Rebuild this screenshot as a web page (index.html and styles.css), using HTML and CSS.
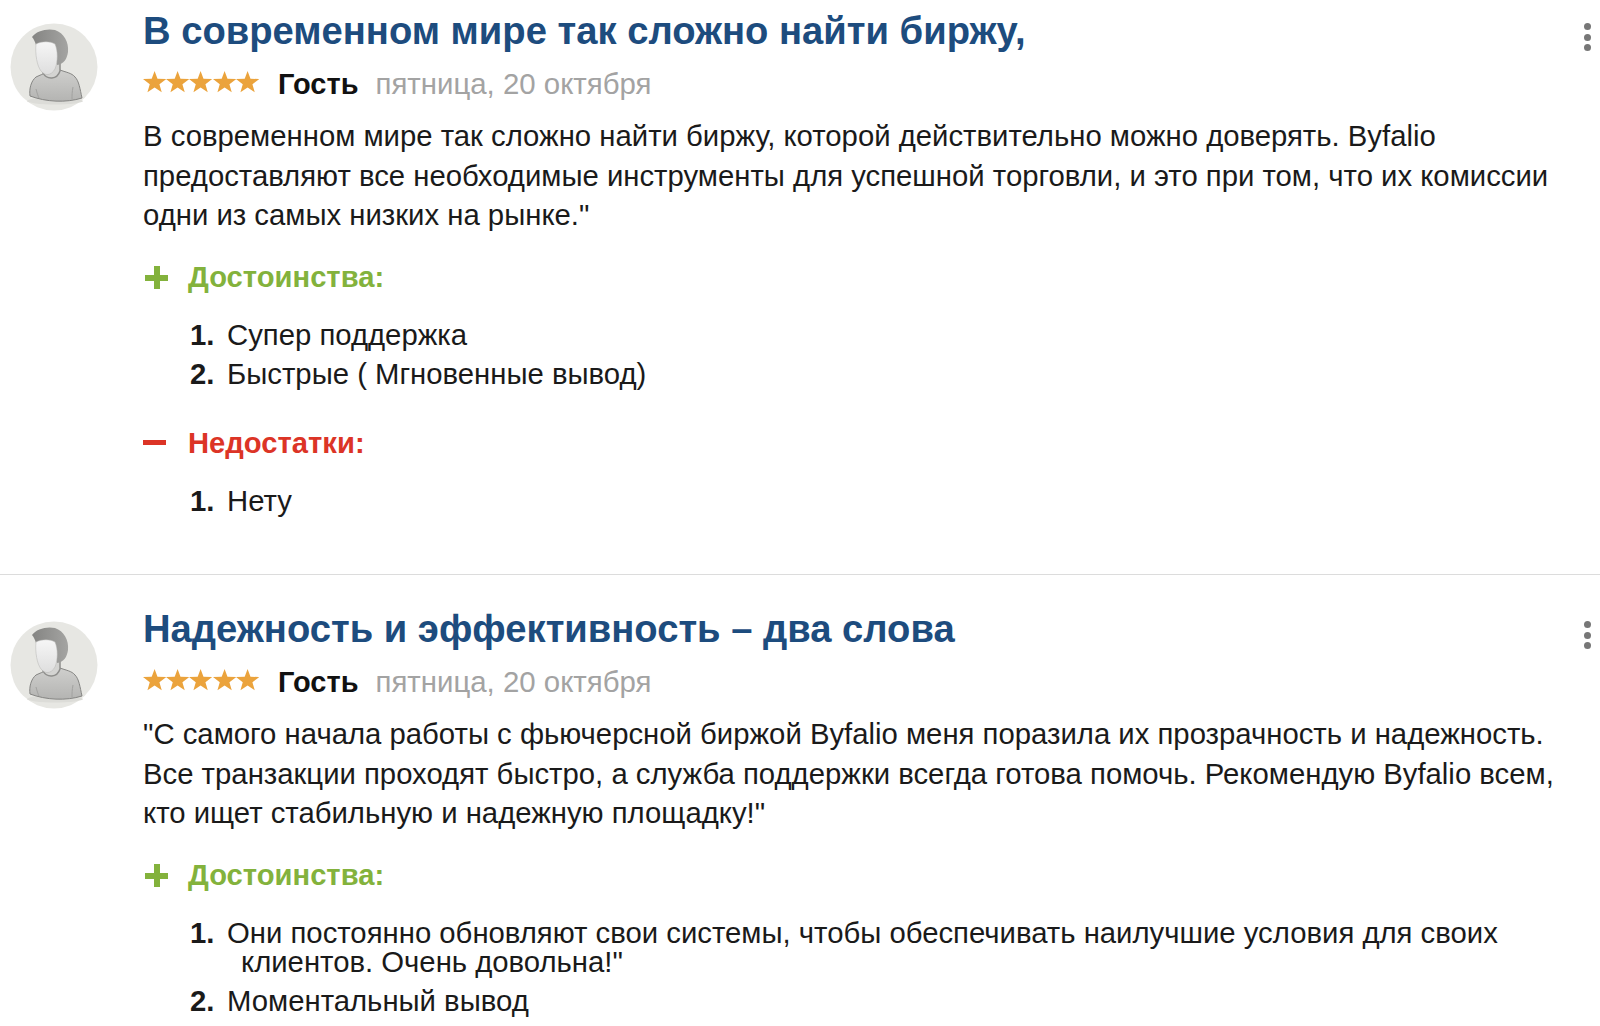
FILE: index.html
```html
<!DOCTYPE html>
<html lang="ru">
<head>
    <meta charset="UTF-8" />
    <meta name="viewport" content="width=device-width, initial-scale=1" />
    <title>Отзывы</title>
    <link rel="stylesheet" href="styles.css">
</head>
<body>
    <svg class="defs" width="0" height="0">
        <defs>
            <linearGradient id="shirt" x1="0" y1="0" x2="0" y2="1">
                <stop offset="0" stop-color="#cfcfcd" />
                <stop offset="1" stop-color="#b4b4b2" />
            </linearGradient>
            <linearGradient id="face" x1="0" y1="0" x2="0" y2="1">
                <stop offset="0" stop-color="#f6f6f6" />
                <stop offset="1" stop-color="#dedede" />
            </linearGradient>
            <linearGradient id="hair" x1="0" y1="0" x2="1" y2="0">
                <stop offset="0" stop-color="#848482" />
                <stop offset="1" stop-color="#a4a4a2" />
            </linearGradient>
            <symbol id="avatar" viewBox="0 0 88 88">
                <circle cx="44" cy="44" r="43.5" fill="#e7e7e3" />
                <ellipse cx="45" cy="78" rx="28" ry="3.500" fill="#dcdcd8" />
                <path d="M20 73 C19 66 21 58 26 54 C30 52 34 51 36 49 C40 55 48 55 50 47 C55 49 62 50 65 54 C69 58 70 66 72 75 C56 80 36 79 20 73 Z" fill="url(#shirt)" stroke="#858583" stroke-width="1" />
                <path d="M26 66 C27 70 28 73 29 75 M63 64 C62 69 62 72 62 76" fill="none" stroke="#a2a2a0" stroke-width="1" />
                <path d="M33 40 L33 50 C37 57 47 57 50 48 L50 36 Z" fill="#d4d4d2" stroke="#8e8e8c" stroke-width="1.500" />
                <path d="M22 14 C26 8 37 5 45 7 C54 10 59 19 58 29 C57 36 54 41 47 42 L44 22 C38 19 31 19 26 22 C25 19 24 16 22 14 Z" fill="url(#hair)" />
                <path d="M26 21 C32 18 40 18 45 21 C48 28 48 38 45 46 C41 53 35 53 31 48 C27 43 25 31 26 21 Z" fill="url(#face)" stroke="#b5b5b3" stroke-width="0.5" />
            </symbol>
            <symbol id="star" viewBox="0 0 24 24">
                <path d="M12 1 L15 9 L24 9.300 L17 14.700 L19.400 23 L12 18.200 L4.600 23 L7 14.700 L0 9.300 L9 9 Z" fill="#eba33c" />
            </symbol>
        </defs>
    </svg>

    <article class="review">
        <svg class="avatar"><use href="#avatar" /></svg>
        <div class="review-body">
            <h2 class="review-title">В современном мире так сложно найти биржу,</h2>
            <div class="meta">
                <span class="stars">
                    <svg class="star"><use href="#star" /></svg>
                    <svg class="star"><use href="#star" /></svg>
                    <svg class="star"><use href="#star" /></svg>
                    <svg class="star"><use href="#star" /></svg>
                    <svg class="star"><use href="#star" /></svg>
                </span>
                <span class="author">Гость</span>
                <span class="date">пятница, 20 октября</span>
            </div>
            <p class="text">В современном мире так сложно найти биржу, которой действительно можно доверять. Byfalio предоставляют все необходимые инструменты для успешной торговли, и это при том, что их комиссии одни из самых низких на рынке."</p>
            <h3 class="pros"><span class="sign plus"></span>Достоинства:</h3>
            <ol class="points">
                <li>Супер поддержка</li>
                <li>Быстрые ( Мгновенные вывод)</li>
            </ol>
            <h3 class="cons"><span class="sign minus"></span>Недостатки:</h3>
            <ol class="points">
                <li>Нету</li>
            </ol>
        </div>
        <div class="more"><i></i><i></i><i></i></div>
    </article>

    <article class="review">
        <svg class="avatar"><use href="#avatar" /></svg>
        <div class="review-body">
            <h2 class="review-title">Надежность и эффективность – два слова</h2>
            <div class="meta">
                <span class="stars">
                    <svg class="star"><use href="#star" /></svg>
                    <svg class="star"><use href="#star" /></svg>
                    <svg class="star"><use href="#star" /></svg>
                    <svg class="star"><use href="#star" /></svg>
                    <svg class="star"><use href="#star" /></svg>
                </span>
                <span class="author">Гость</span>
                <span class="date">пятница, 20 октября</span>
            </div>
            <p class="text">"С самого начала работы с фьючерсной биржой Byfalio меня поразила их прозрачность и надежность. Все транзакции проходят быстро, а служба поддержки всегда готова помочь. Рекомендую Byfalio всем, кто ищет стабильную и надежную площадку!"</p>
            <h3 class="pros"><span class="sign plus"></span>Достоинства:</h3>
            <ol class="points">
                <li>Они постоянно обновляют свои системы, чтобы обеспечивать наилучшие условия для своих клиентов. Очень довольна!"</li>
                <li>Моментальный вывод</li>
            </ol>
        </div>
        <div class="more"><i></i><i></i><i></i></div>
    </article>
</body>
</html>
```

FILE: styles.css
```css
body {
    margin: 0;
    height: 1026px;
    overflow: hidden;
    background-color: #fff;
    color: #1a1a1a;
    font-family: "Liberation Sans", Arial, sans-serif;
}
.defs {
    position: absolute;
}
.review {
    display: flex;
    height: 575px;
    padding: 0 10px;
    box-sizing: border-box;
    border-bottom: 1px solid #dcdcdc;
}
.review + .review {
    border-bottom: none;
    height: 451px;
    padding-top: 23px;
}
.avatar {
    flex: none;
    width: 88px;
    height: 88px;
    margin-top: 23px;
    margin-right: 45px;
}
.review-body {
    flex: 1;
    min-width: 0;
}
.review-title {
    margin: 10px 0 0;
    font-size: 38.200px;
    line-height: 42px;
    font-weight: bold;
    color: #1d4c7e;
}
.meta {
    display: flex;
    align-items: center;
    height: 42px;
    margin-top: 11px;
}
.stars {
    display: flex;
    width: 116px;
    margin-top: -5px;
}
.star {
    flex: none;
    width: 23.200px;
    height: 23.200px;
}
.author {
    margin-left: 19px;
    font-size: 29px;
    font-weight: bold;
    color: #111;
}
.date {
    margin-left: 17px;
    font-size: 29.400px;
    color: #a3a3a3;
}
.text {
    margin: 11px 0 0;
    font-size: 29.300px;
    line-height: 39.600px;
}
.pros, .cons {
    display: flex;
    align-items: center;
    margin: 23px 0 0;
    height: 40px;
    font-size: 29.200px;
    font-weight: bold;
}
.pros {
    color: #83b23c;
}
.cons {
    color: #dc3426;
    margin-top: 36px;
}
.sign {
    position: relative;
    flex: none;
    width: 23px;
    height: 23px;
    margin-right: 22px;
}
.sign::before, .sign::after {
    content: "";
    position: absolute;
    background-color: currentColor;
}
.plus {
    left: 2px;
    top: 0;
}
.plus::before {
    left: 0;
    right: 0;
    top: 9px;
    height: 6px;
}
.plus::after {
    top: 0;
    bottom: 0;
    left: 8.500px;
    width: 6px;
}
.minus::before {
    left: 0;
    right: 0;
    top: 8px;
    height: 5px;
}
.minus::after {
    display: none;
}
.points {
    list-style: none;
    counter-reset: item;
    margin: 22px 0 0;
    padding: 0 0 0 98px;
    font-size: 29.300px;
    line-height: 29px;
}
.points li {
    counter-increment: item;
    text-indent: -51px;
    margin-bottom: 10.200px;
}
.points li::before {
    content: counter(item) ".";
    display: inline-block;
    width: 37px;
    text-indent: 0;
    font-weight: bold;
}
.more {
    display: flex;
    flex-direction: column;
    gap: 3.500px;
    flex: none;
    margin-top: 23px;
    margin-left: 1px;
    margin-right: -1px;
}
.more i {
    display: block;
    width: 7px;
    height: 7px;
    border-radius: 50%;
    background-color: #777;
}
```
